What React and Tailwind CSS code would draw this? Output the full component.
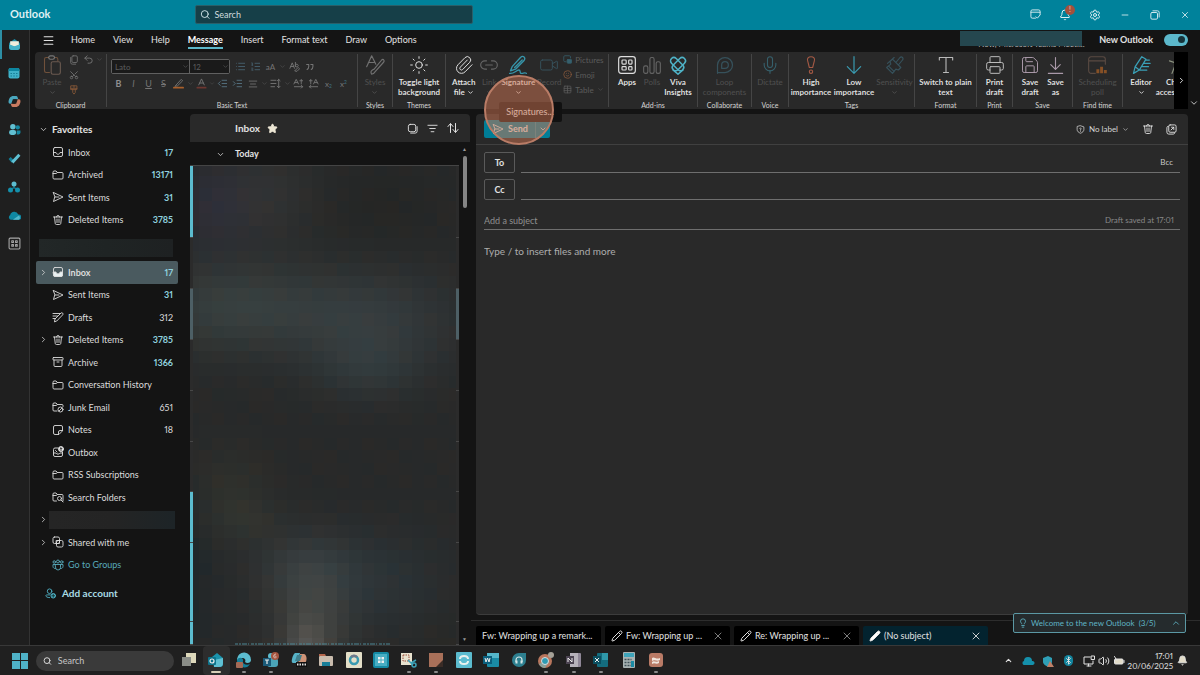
import React from 'react';
import clsx from 'clsx';
import {
  Search, ChevronDown, ChevronRight, ChevronUp, Menu, Minus, X, Settings, Bell, Star,
  Scissors, Undo2, Sun, Paperclip, Link2, Video, Smile, Table, Mic, Printer, Save,
  ListFilter, Lightbulb, Volume2, Pencil, Archive,
  Bluetooth, List, ListOrdered, IndentDecrease, IndentIncrease,
} from 'lucide-react';

function Icon({ size = 12, width = 1.8, className, children }) {
  return (
    <svg
      width={size} height={size} viewBox="0 0 24 24" fill="none" stroke="currentColor"
      strokeWidth={width} strokeLinecap="round" strokeLinejoin="round"
      className={clsx('shrink-0', className)} aria-hidden="true"
    >
      {children}
    </svg>
  );
}

const FolderShape = () => <path d="M2 6a2 2 0 0 1 2-2h4l3 3h9a2 2 0 0 1 2 2v9a2 2 0 0 1-2 2H4a2 2 0 0 1-2-2zM2 9h6l3-2" />;

const icons = {
  inbox: <Icon><rect x="3" y="3" width="18" height="18" rx="3" /><path d="M3 13h5c.5 2.500 2 3.500 4 3.500s3.500-1 4-3.500h5" /></Icon>,
  inboxFull: <Icon><rect x="3" y="3" width="18" height="18" rx="3" /><path d="M3 12h5c.5 2.500 2 3.500 4 3.500s3.500-1 4-3.500h5v6a3 3 0 0 1-3 3H6a3 3 0 0 1-3-3z" fill="#e8f1f3" /></Icon>,
  folder: <Icon><FolderShape /></Icon>,
  send: <Icon><path d="M3 3l19 9-19 9 2.500-9zM5.500 12H14" /></Icon>,
  trash: <Icon><path d="M3 6h18M9 6a3 3 0 0 1 6 0M5 6l1.500 13a2.500 2.500 0 0 0 2.500 2h6a2.500 2.500 0 0 0 2.500-2L19 6M10 10v7M14 10v7" /></Icon>,
  drafts: <Icon><path d="M2 5h15M2 10h9M2 15h5M5 21l1-5L18 4a2.500 2.500 0 0 1 3.500 3.500L10 19.500z" /></Icon>,
  archive: <Archive size={12} strokeWidth={1.8} />,
  junk: <Icon><path d="M10 20H4a2 2 0 0 1-2-2V6a2 2 0 0 1 2-2h4l3 3h9a2 2 0 0 1 2 2v2M2 9h6l3-2" /><circle cx="17" cy="17" r="5" /><path d="M14 20l6-6" /></Icon>,
  note: <Icon><path d="M21 13V6a3 3 0 0 0-3-3H6a3 3 0 0 0-3 3v12a3 3 0 0 0 3 3h7zM21 13h-5a3 3 0 0 0-3 3v5" /></Icon>,
  outbox: <Icon><path d="M12 4H6a3 3 0 0 0-3 3v11a3 3 0 0 0 3 3h12a3 3 0 0 0 3-3v-6M3 14h5c1 3 7 3 8 0h5M7 9l3 3" /><circle cx="18" cy="6" r="5" fill="#eee" /><path d="M18 9V4M16 5.500l2-2 2 2" stroke="#222" /></Icon>,
  searchFolder: <Icon><path d="M9 20H4a2 2 0 0 1-2-2V6a2 2 0 0 1 2-2h4l3 3h9a2 2 0 0 1 2 2v11M2 9h6l3-2" /><circle cx="15" cy="15" r="4" /><path d="M18 18l4 4" /></Icon>,
  shared: <Icon><rect x="2" y="2" width="13" height="13" rx="3" /><rect x="9" y="9" width="13" height="13" rx="3" /><path d="M9 9h6v6H9z" /></Icon>,
  groups: <Icon><circle cx="12" cy="5" r="3" /><circle cx="4.500" cy="6" r="2.500" /><circle cx="19.500" cy="6" r="2.500" /><path d="M7 11h10v6a5 5 0 0 1-10 0zM7 11H2v4a4 4 0 0 0 5 4M17 11h5v4a4 4 0 0 1-5 4" /></Icon>,
};

/* ---------- title bar ---------- */

function TitleBar() {
  return (
    <header className="flex h-[30px] shrink-0 items-center bg-[#00829b] pb-px text-[#dff0f3]">
      <div className="w-[195px] shrink-0 pl-[10px] text-[11px] font-bold">Outlook</div>
      <label className="flex h-[19px] w-[278px] items-center gap-1 rounded-xs border border-[#2a5f69] bg-[#163f48] px-1">
        <Search size={11} strokeWidth={2} />
        <span className="sr-only">Search mail</span>
        <input placeholder="Search" className="h-full w-full bg-transparent text-[9px] outline-none placeholder:text-[#cfdcde]" />
      </label>
      <div className="ml-auto grid grid-cols-6 items-center">
        <button aria-label="My day" className="flex w-[30px] justify-center">
          <Icon size={11} width={2}><path d="M12 20H5a3 3 0 0 1-3-3V5a3 3 0 0 1 3-3h14a3 3 0 0 1 3 3v7M2 7h20M13 17l3 3 6-7" /></Icon>
        </button>
        <button aria-label="Notifications" className="relative flex w-[30px] justify-center">
          <Bell size={12} />
          <span className="absolute -top-1 right-[5px] flex size-[10px] items-center justify-center rounded-full bg-[#a3503c] text-[7px] text-[#e8cfc8]">!</span>
        </button>
        <button aria-label="Settings" className="flex w-[30px] justify-center"><Settings size={12} /></button>
        <button aria-label="Minimize" className="flex w-[30px] justify-center"><Minus size={10} strokeWidth={2} /></button>
        <button aria-label="Restore" className="flex w-[30px] justify-center">
          <Icon size={10} width={2.2}><rect x="2" y="6" width="16" height="16" rx="3" /><path d="M7 2h11a4 4 0 0 1 4 4v11" /></Icon>
        </button>
        <button aria-label="Close" className="flex w-[30px] justify-center"><X size={10} strokeWidth={2} /></button>
      </div>
    </header>
  );
}

/* ---------- app rail ---------- */

const railApps = [
  ['Mail', <svg width="13" height="13" viewBox="0 0 24 24"><path d="M2 9l10-7 10 7v9a4 4 0 0 1-4 4H6a4 4 0 0 1-4-4z" fill="#1c8ba5" /><path d="M4 6h16v7l-8 3-8-3z" fill="#f0eddc" /><path d="M2 12l10 3 10-3v6a4 4 0 0 1-4 4H6a4 4 0 0 1-4-4z" fill="#45b2c8" /></svg>],
  ['Calendar', <svg width="12" height="12" viewBox="0 0 24 24"><rect x="1" y="2" width="22" height="21" rx="4" fill="#3fb1c8" /><path d="M1 8V6a4 4 0 0 1 4-4h14a4 4 0 0 1 4 4v2z" fill="#0d86a0" /><path d="M5 13h14M5 18h14" stroke="#167d94" strokeWidth="2" strokeDasharray="3 2.5" /></svg>],
  ['Copilot', <svg width="13" height="13" viewBox="0 0 24 24"><path d="M8 2h7c3 0 3 4 4 6H9L6 16H4c-5 0-3-8 0-12z" fill="#4aa6bd" /><path d="M16 22H9c-3 0-3-4-4-6h10l3-8h2c5 0 3 8 0 12z" fill="#c87a60" /><path d="M10 8h6l-3 8H8z" fill="#1f1f1f" /></svg>],
  ['People', <svg width="13" height="13" viewBox="0 0 24 24"><circle cx="9" cy="7" r="5" fill="#61c0d2" /><circle cx="18" cy="8" r="4" fill="#1388a2" /><rect x="2" y="13" width="13" height="9" rx="4" fill="#61c0d2" /><path d="M16 14h7v3c0 3-3 5-7 4z" fill="#1388a2" /></svg>],
  ['To Do', <svg width="13" height="13" viewBox="0 0 24 24"><path d="M1 13l4-4 6 6-4 5z" fill="#127d96" /><path d="M6 17L19 3l4 4L10 21z" fill="#5fc0d3" /></svg>],
  ['Org Explorer', <svg width="12" height="12" viewBox="0 0 24 24"><path d="M12 8v6M5 18l7-5 7 5" stroke="#147d94" strokeWidth="3" fill="none" /><circle cx="12" cy="6" r="5" fill="#5cbccf" /><circle cx="5" cy="18" r="5" fill="#1490ac" /><circle cx="19" cy="18" r="5" fill="#1490ac" /></svg>],
  ['OneDrive', <svg width="13" height="13" viewBox="0 0 24 24"><path d="M5 20a5 5 0 0 1-1-9 8 8 0 0 1 15-1 5 5 0 0 1 1 10z" fill="#0f87a2" /><path d="M9 20l11-8a5 5 0 0 1 0 8z" fill="#52b7cb" /></svg>],
  ['More apps', <Icon size={13} width={2} className="text-[#a8a8a8]"><rect x="2" y="2" width="20" height="20" rx="2" /><path d="M7 7h3v3H7zM14 7h3v3h-3zM7 14h3v3H7zM14 14h3v3h-3z" /></Icon>],
];

function AppRail() {
  return (
    <nav className="w-[30px] shrink-0 border-r border-[#333] bg-[#1f1f1f]">
      <div className="grid h-[228px] auto-rows-fr">
        {railApps.map(([name, art], i) => (
          <a
            key={name} href="#" aria-label={name}
            className={clsx('flex items-center border-l-2 pl-[6px]', i === 0 ? 'border-[#2d8fa5]' : 'border-transparent')}
          >
            {art}
          </a>
        ))}
      </div>
    </nav>
  );
}

/* ---------- tabs over the ribbon ---------- */

function TabBar() {
  const tabs = ['Home', 'View', 'Help', 'Message', 'Insert', 'Format text', 'Draw', 'Options'];
  return (
    <div className="flex h-[22px] shrink-0 items-start pt-[2px] pr-3 pl-[12px]">
      <button aria-label="Menu" className="mr-[16px] flex h-[17px] items-center"><Menu size={13} strokeWidth={2} /></button>
      <div role="tablist" className="flex gap-[18px] text-[9px]">
        {tabs.map((tab) => (
          <button
            key={tab} role="tab" aria-selected={tab === 'Message'}
            className={clsx('h-[17px] border-b-2', tab === 'Message' ? 'border-[#5cb8cb] font-bold text-white' : 'border-transparent')}
          >
            {tab}
          </button>
        ))}
      </div>
      <div className="relative ml-auto h-[20px] w-[122px]">
        <p className="pt-[6px] pl-[18px] text-[8px] leading-[12px] whitespace-nowrap text-[#bbb]">Now, Microsoft Teams Meeti...</p>
        <span className="absolute inset-x-0 -top-px h-[15px] bg-[#25474f]" />
      </div>
      <label className="ml-[17px] flex h-[15px] items-center gap-[11px] text-[9px] font-bold">
        New Outlook
        <input
          type="checkbox" defaultChecked
          className="flex h-[12px] w-[24px] appearance-none items-center justify-end rounded-full bg-[#5cb8cb] px-[3px] before:size-[7px] before:rounded-full before:bg-[#16343b]"
        />
      </label>
    </div>
  );
}

/* ---------- ribbon ---------- */

function Group({ label, className, children }) {
  return (
    <div className={clsx('flex h-[57px] shrink-0', className)}>
      <div className="flex min-w-0 flex-1 flex-col">
        <div className="flex flex-1 justify-center">{children}</div>
        <div className="h-[8px] text-center text-[7px] leading-[8px] text-[#d4d4d4]">{label}</div>
      </div>
      <span className="my-[2px] w-px bg-[#454545]" />
    </div>
  );
}

function BigButton({ art, lines, dim, arrow, inlineArrow, className, children }) {
  return (
    <div className={clsx('relative shrink-0 pt-[3px]', className)}>
      <button className={clsx('flex w-full flex-col items-center text-[8px] leading-[10px] whitespace-nowrap', dim ? 'text-[#505050]' : 'font-bold text-[#dedede]')}>
        <span className="mb-[2px] flex h-[20px] items-center">{art}</span>
        {lines.map((line, i) => (
          <span key={line} className="flex items-center gap-[2px]">
            {line}
            {inlineArrow && i === lines.length - 1 && <ChevronDown size={7} strokeWidth={3} />}
          </span>
        ))}
        {arrow && <ChevronDown size={7} strokeWidth={3} className="mt-[2px]" />}
      </button>
      {children}
    </div>
  );
}

const Tiny = ({ label, className, children }) => (
  <button aria-label={label} className={clsx('flex h-[15px] items-center justify-center text-[#757575]', className ?? 'w-[15px]')}>{children}</button>
);

const Down = () => <ChevronDown size={7} strokeWidth={2.5} className="text-[#4a4a4a]" />;

function BasicText() {
  return (
    <div className="flex w-full flex-col gap-[2px] pt-[7px] pl-[4px]">
      <div className="flex items-center">
        <div className="mr-[3px] flex h-[15px] rounded-xs border border-[#606060] text-[8px] text-[#5d5d5d]">
          <span className="relative flex w-[78px] items-center border-r border-[#606060]">
            <select aria-label="Font" className="h-full w-full appearance-none bg-[#1a1a1a] pl-[3px] outline-none"><option>Lato</option></select>
            <ChevronDown size={7} className="absolute right-0" />
          </span>
          <span className="relative flex w-[39px] items-center">
            <select aria-label="Font size" className="h-full w-full appearance-none bg-[#1a1a1a] pl-[3px] outline-none"><option>12</option></select>
            <ChevronDown size={7} className="absolute right-0" />
          </span>
        </div>
        <Tiny label="Bullets"><List size={11} className="text-[#46606e]" /></Tiny>
        <Tiny label="Numbering"><ListOrdered size={11} className="text-[#46606e]" /></Tiny>
        <Tiny label="Change case"><span className="text-[8px]">aA</span></Tiny>
        <Tiny label="Case options" className="w-[9px]"><Down /></Tiny>
        <Tiny label="Clear formatting"><Icon size={11} width={2}><path d="M2 16L7 4l5 12M4 12h6M14 3v9M14 9a3 3 0 1 1 0 2M13 21l7-7 3 3-5 5z" /></Icon></Tiny>
        <Tiny label="Quote"><Icon size={10} width={2.500}><path d="M4 6h5v5c0 4-2 6-4 7M14 6h5v5c0 4-2 6-4 7" /></Icon></Tiny>
      </div>
      <div className="flex items-center text-[9px]">
        <Tiny label="Bold"><b className="text-[#8f8f8f]">B</b></Tiny>
        <Tiny label="Italic"><i>I</i></Tiny>
        <Tiny label="Underline"><u>U</u></Tiny>
        <Tiny label="Strikethrough"><s>S</s></Tiny>
        <Tiny label="Highlight"><Icon size={11} width={2}><path d="M7 15L18 3l3 3L10 17l-5 1z" /><path d="M2 21h20" stroke="#a85f2b" strokeWidth="4" /></Icon></Tiny>
        <Tiny label="Highlight colours" className="w-[8px]"><Down /></Tiny>
        <Tiny label="Font colour"><Icon size={11} width={2}><path d="M6 15l6-13 6 13M8 11h8" /><path d="M3 21h18" stroke="#6d3730" strokeWidth="4" /></Icon></Tiny>
        <Tiny label="Font colours" className="w-[6px]"><Down /></Tiny>
        <Tiny label="Decrease indent"><IndentDecrease size={11} className="text-[#557382]" /></Tiny>
        <Tiny label="Increase indent"><IndentIncrease size={11} className="text-[#557382]" /></Tiny>
        <Tiny label="Align"><Icon size={10} width={2}><path d="M3 5h18M6 12h12M3 19h18" /></Icon></Tiny>
        <Tiny label="Alignments" className="w-[8px]"><Down /></Tiny>
        <Tiny label="Line spacing"><Icon size={11} width={2}><path d="M2 5h11M2 12h11M2 19h8M19 3v18M16 6l3-3 3 3M16 18l3 3 3-3" /></Icon></Tiny>
        <Tiny label="Line spacings" className="w-[8px]"><Down /></Tiny>
        <Tiny label="Left to right"><Icon size={11} width={2}><path d="M2 13L7 3l5 10M4 10h6M18 3v10M15 6h6M3 19h18M18 16l3 3-3 3" /></Icon></Tiny>
        <Tiny label="Right to left"><Icon size={11} width={2}><path d="M12 13l5-10 5 10M14 10h6M6 3v10M3 6h6M3 19h18M6 16l-3 3 3 3" /></Icon></Tiny>
        <Tiny label="Subscript"><span className="text-[8px]">x<sub className="text-[5px] text-[#3f7486]">2</sub></span></Tiny>
        <Tiny label="Superscript"><span className="text-[8px]">x<sup className="text-[5px] text-[#3f7486]">2</sup></span></Tiny>
      </div>
    </div>
  );
}

function SignatureButton() {
  return (
    <BigButton
      className="w-[34px]" lines={['Signature']} arrow
      art={<Icon size={20} width={1.6} className="text-[#3796ab]"><path d="M5 14L15 3c3-3 7 0 4 4L9 17l-6 2zM8 15l9-9M2 22c5 1 8-4 11-4s0 5 4 4 3-1 5 0" /></Icon>}
    >
      <button className="absolute top-[50px] -left-[2px] z-10 h-[20px] w-[63px] rounded-xs bg-[#111] pl-[7px] text-left text-[9px] whitespace-nowrap text-[#e5e5e5]">
        Signatures...
      </button>
      {/* click highlight */}
      <span className="pointer-events-none absolute top-[23px] -left-[17px] z-20 size-[70px] rounded-full border-2 border-[#b97c66] bg-[#cf7553]/50" />
    </BigButton>
  );
}

function Ribbon() {
  return (
    <div className="flex shrink-0 pl-[5px]">
      <div className="flex min-w-0 flex-1 rounded-sm bg-[#292929]">
        <Group label="Clipboard" className="w-[72px]">
          <BigButton
            className="w-[28px]" lines={['Paste']} arrow dim
            art={<Icon size={20} width={1.3}><path d="M9 21H5a2 2 0 0 1-2-2V5a2 2 0 0 1 2-2h3M15 3h2a2 2 0 0 1 2 2v2" stroke="#70513b" /><rect x="8" y="1" width="7" height="4" rx="2" stroke="#777" /><rect x="11" y="8" width="11" height="15" rx="2" stroke="#6b5a50" /></Icon>}
          />
          <div className="flex flex-col">
            <Tiny label="Copy"><Icon size={10} width={2}><rect x="7" y="2" width="13" height="16" rx="3" /><path d="M4 6v12a4 4 0 0 0 4 4h8" /></Icon></Tiny>
            <Tiny label="Cut"><Scissors size={10} className="-rotate-90" /></Tiny>
            <Tiny label="Format painter"><Icon size={10} width={2} className="text-[#8a5a38]"><path d="M5 2h14v9H5zM5 8h14M9 11v7l3 4 3-4v-7M12 2v4" /></Icon></Tiny>
          </div>
          <div className="flex">
            <Tiny label="Undo"><Undo2 size={11} /></Tiny>
            <Tiny label="Undo list" className="w-[7px]"><Down /></Tiny>
          </div>
        </Group>
        <Group label="Basic Text" className="w-[251px]"><BasicText /></Group>
        <Group label="Styles" className="w-[35px]">
          <BigButton lines={['Styles']} arrow dim art={<Icon size={20} width={1.4} className="text-[#717171]"><path d="M2 14L8 1l5 10M4 9h7M8 23c-2-3 0-5 3-6L20 6c2-2 4 1 2 3L13 19c-2 3-3 4-5 4z" /></Icon>} />
        </Group>
        <Group label="Themes" className="w-[53px]">
          <BigButton lines={['Toggle light', 'background']} art={<Sun size={20} strokeWidth={1.2} />} />
        </Group>
        <Group className="w-[163px]">
          <BigButton className="w-[27px]" lines={['Attach', 'file']} inlineArrow art={<Paperclip size={20} strokeWidth={1.2} />} />
          <BigButton className="w-[24px]" lines={['Link']} arrow dim art={<Link2 size={20} strokeWidth={1.4} className="text-[#666]" />} />
          <SignatureButton />
          <BigButton className="w-[28px]" lines={['Record']} dim art={<Video size={20} strokeWidth={1.2} className="text-[#36515b]" />} />
          <div className="flex flex-col text-[8px] text-[#5c5c5c]">
            <button className="flex h-[15px] items-center gap-[3px]"><Icon size={9} width={2} className="text-[#35606e]"><path d="M8 18H5a3 3 0 0 1-3-3V5a3 3 0 0 1 3-3h12a3 3 0 0 1 3 3v3" /><rect x="11" y="12" width="12" height="10" rx="2" fill="#35606e" /></Icon>Pictures</button>
            <button className="flex h-[15px] items-center gap-[3px]"><Smile size={9} className="text-[#8a5a3c]" />Emoji</button>
            <button className="flex h-[15px] items-center gap-[3px]"><Table size={9} />Table<Down /></button>
          </div>
        </Group>
        <Group label="Add-ins" className="w-[89px]">
          <BigButton className="w-[25px]" lines={['Apps']} art={<Icon size={20} width={1.4}><rect x="2" y="2" width="20" height="20" rx="3" /><rect x="6" y="6" width="5" height="5" rx="1" /><rect x="14" y="6" width="4" height="5" rx="1" /><rect x="6" y="14" width="5" height="4" rx="1" /><rect x="14" y="14" width="4" height="4" rx="1" /></Icon>} />
          <BigButton className="w-[25px]" lines={['Polls']} dim art={<Icon size={20} width={1.3} className="text-[#666]"><rect x="2" y="13" width="5" height="9" rx="2" /><rect x="9.500" y="3" width="5" height="19" rx="2" /><rect x="17" y="8" width="5" height="14" rx="2" /></Icon>} />
          <BigButton className="w-[27px]" lines={['Viva', 'Insights']} art={<Icon size={20} width={1.8} className="text-[#4fb3c7]"><rect x="1" y="8" width="19" height="8" rx="4" transform="rotate(45 12 12)" /><rect x="4" y="8" width="19" height="8" rx="4" transform="rotate(-45 12 12)" /><path d="M6 18l6 5 6-5" /></Icon>} />
        </Group>
        <Group label="Collaborate" className="w-[54px]">
          <BigButton lines={['Loop', 'components']} dim art={<Icon size={20} width={1.5} className="text-[#36515b]"><path d="M3 22V12a9 9 0 1 1 9 9H3M8 16v-4a4 4 0 1 1 4 4H8" /></Icon>} />
        </Group>
        <Group label="Voice" className="w-[37px]">
          <BigButton lines={['Dictate']} dim art={<Mic size={20} strokeWidth={1.3} className="text-[#36606c]" />} />
        </Group>
        <Group label="Tags" className="w-[126px]">
          <BigButton className="w-[43px]" lines={['High', 'importance']} art={<Icon size={20} width={1.3} className="text-[#a65a45]"><path d="M12 2c3 0 5 2 4 5l-2 8h-4L8 7c-1-3 1-5 4-5z" /><circle cx="12" cy="20" r="2" /></Icon>} />
          <BigButton className="w-[43px]" lines={['Low', 'importance']} art={<Icon size={20} width={1.4} className="text-[#3a9db3]"><path d="M12 2v20M4 14l8 8 8-8" /></Icon>} />
          <BigButton className="w-[38px]" lines={['Sensitivity']} arrow dim art={<Icon size={20} width={1.4} className="text-[#36515b]"><path d="M9 5l10 10-3 3-3-1-4 5-7-7 5-4-1-3zM13 9l5-6a2 2 0 0 1 3 3l-5 6M11 3L3 10M5 14l6 6" /></Icon>} />
        </Group>
        <Group label="Format" className="w-[62px]">
          <BigButton lines={['Switch to plain', 'text']} art={<Icon size={20} width={1.3} className="text-[#bbb]"><path d="M4 6V3h16v3M12 3v18M9 21h6" /></Icon>} />
        </Group>
        <Group label="Print" className="w-[36px]">
          <BigButton lines={['Print', 'draft']} art={<Printer size={20} strokeWidth={1.200} className="text-[#bbb]" />} />
        </Group>
        <Group label="Save" className="w-[60px]">
          <BigButton className="w-[26px]" lines={['Save', 'draft']} art={<Save size={20} strokeWidth={1.200} className="text-[#a998a8]" />} />
          <BigButton className="w-[25px]" lines={['Save', 'as']} art={<Icon size={19} width={1.4} className="text-[#a998a8]"><path d="M12 2v15M6 11l6 6 6-6M3 22h18" /></Icon>} />
        </Group>
        <Group label="Find time" className="w-[50px]">
          <BigButton lines={['Scheduling', 'poll']} dim art={<Icon size={20} width={1.3} className="text-[#5a4a42]"><path d="M10 22H5a3 3 0 0 1-3-3V5a3 3 0 0 1 3-3h14a3 3 0 0 1 3 3v6M2 7h20" /><path d="M13 22v-5M17.500 22v-8M22 22v-4" stroke="#865026" strokeWidth="3.500" strokeLinecap="butt" /></Icon>} />
        </Group>
        <div className="flex min-w-0 flex-1 overflow-hidden">
          <BigButton className="w-[36px]" lines={['Editor']} arrow art={<Icon size={20} width={1.5} className="text-[#3aa0b7]"><path d="M3 22l2-8L13 2l5 3-8 13zM5 14l5 4M16 10h7M14 14h7M11 18h8M17 6h5" /></Icon>} />
          <BigButton className="w-[36px]" lines={['Check', 'accessibility']} art={<Icon size={20} width={1.400} className="text-[#8d9480]"><circle cx="12" cy="4" r="2.500" /><path d="M3 7l6 2v5l-3 8M21 7l-6 2v5l3 8M9 9h6" /></Icon>} />
        </div>
        <button aria-label="Scroll ribbon" className="z-10 flex w-[14px] shrink-0 items-center justify-center bg-black"><ChevronRight size={9} strokeWidth={2.500} /></button>
      </div>
      <button aria-label="Collapse ribbon" className="flex w-3 items-end justify-center pb-px"><ChevronDown size={10} strokeWidth={2} /></button>
    </div>
  );
}

/* ---------- folders ---------- */

const favorites = [
  { icon: 'inbox', name: 'Inbox', count: 17, unread: true },
  { icon: 'folder', name: 'Archived', count: 13171, unread: true },
  { icon: 'send', name: 'Sent Items', count: 31, unread: true },
  { icon: 'trash', name: 'Deleted Items', count: 3785, unread: true },
];

const mailbox = [
  { icon: 'inboxFull', name: 'Inbox', count: 17, unread: true, open: true, selected: true },
  { icon: 'send', name: 'Sent Items', count: 31, unread: true },
  { icon: 'drafts', name: 'Drafts', count: 312 },
  { icon: 'trash', name: 'Deleted Items', count: 3785, unread: true, open: true },
  { icon: 'archive', name: 'Archive', count: 1366, unread: true },
  { icon: 'folder', name: 'Conversation History' },
  { icon: 'junk', name: 'Junk Email', count: 651 },
  { icon: 'note', name: 'Notes', count: 18 },
  { icon: 'outbox', name: 'Outbox' },
  { icon: 'folder', name: 'RSS Subscriptions' },
  { icon: 'searchFolder', name: 'Search Folders' },
  { hidden: true, open: true },
  { icon: 'shared', name: 'Shared with me', open: true },
  { icon: 'groups', name: 'Go to Groups', link: true },
];

function FolderRow({ icon, name, count, unread, open, selected, link, hidden }) {
  return (
    <a
      href="#"
      className={clsx('flex items-center rounded-xs pr-[5px] pl-[3px] text-[9px]', selected && 'bg-[#4a5a5f] font-bold', link ? 'text-[#58aabb]' : 'text-[#dcdcdc]')}
    >
      <span className={hidden ? 'w-[10px]' : 'w-[13px]'}>{open && <ChevronRight size={9} strokeWidth={2} />}</span>
      {hidden ? (
        <span className="-mr-[2px] h-[18px] flex-1 bg-linear-to-r from-[#252525] via-[#242424] to-[#1d2427]" />
      ) : (
        <>
          <span className="flex w-[16px]">{icons[icon]}</span>
          <span className="flex-1">{name}</span>
          <span className={clsx(unread && 'font-bold text-[#8fd0de]')}>{count}</span>
        </>
      )}
    </a>
  );
}

function FolderPane() {
  return (
    <aside className="flex w-[160px] shrink-0 flex-col pt-[10px] pr-[12px] pl-[6px]">
      <button className="flex h-[20px] items-center gap-[4px] pl-[3px] text-[10px] font-bold"><ChevronDown size={9} strokeWidth={2} />Favorites</button>
      <div className="mt-[2px] grid h-[90px] auto-rows-fr">
        {favorites.map((f) => <FolderRow key={f.name} {...f} />)}
      </div>
      <div className="mt-[8px] mr-[5px] ml-[3px] h-[18px] shrink-0 bg-linear-to-r from-[#222727] via-[#1f2424] to-[#1e2122]" />
      <div className="mt-[4px] grid h-[315px] auto-rows-fr">
        {mailbox.map((f, i) => <FolderRow key={i} {...f} />)}
      </div>
      <button className="mt-[10px] flex items-center gap-[6px] pl-[9px] text-[10px] font-bold text-[#a9dbe4]">
        <Icon size={11} width={2} className="text-[#4fb0c4]"><circle cx="10" cy="7" r="5" /><path d="M10 21c-5 0-8-2-8-4s1-2 3-2h6" /><circle cx="18" cy="17" r="5" fill="#4fb0c4" /><path d="M18 14v6M15 17h6" stroke="#133" /></Icon>
        Add account
      </button>
    </aside>
  );
}

/* ---------- message list ---------- */

// [col, row, spread x, spread y, r, g, b]
const glows = [
  [1.500, 3, 3, 3.500, 4, 3, 12],
  [6, 2, 4, 4, 9, 9, 9],
  [15, 3, 6, 4, -3, -3, -4],
  [3, 11, 7, 3.500, 15, 21, 20],
  [14, 12, 7, 4, 13, 18, 20],
  [14, 16, 4, 2.500, 6, 11, 12],
  [3, 25, 3, 3, 6, 6, 2],
  [4, 28, 3, 2, 7, 8, 5],
  [9, 32, 4, 3, 14, 18, 19],
  [9.500, 37, 3, 4, 28, 25, 20],
  [9, 39, 1.500, 2.500, 22, 24, 27],
  [15, 33, 5, 4, 3, 9, 12],
  [0, 33, 1.500, 6, -8, -2, 1],
  [20, 38, 2.500, 3, 0, -1, -3],
];

function cellColour(col, row) {
  const noise = ((col * 37 + row * 91 + col * row * 13) % 5) - 2;
  const rgb = [40 + noise, 41, 41 - noise / 2];
  glows.forEach(([x, y, sx, sy, ...add]) => {
    const k = Math.exp(-(((col - x) / sx) ** 2 + ((row - y) / sy) ** 2));
    add.forEach((v, i) => { rgb[i] += v * k; });
  });
  return `rgb(${rgb.map(Math.round).join(',')})`;
}

function Preview() {
  const cells = [];
  for (let row = 0; row < 39; row++) {
    for (let col = 0; col < 22; col++) {
      cells.push(<rect key={`${row}-${col}`} x={col * 12.5 - 6.5} y={row * 12.5 - 2.5} width="12.5" height="12.5" fill={cellColour(col, row)} />);
    }
  }
  return (
    <svg viewBox="0 0 263 480" preserveAspectRatio="none" shapeRendering="crispEdges" className="h-full min-w-0 flex-1" aria-hidden="true">
      {cells}
      <path d="M42 479h155" stroke="#4d8795" strokeWidth="1" strokeDasharray="3 1 2 1 5 1 1 2" />
    </svg>
  );
}

const rowMarks = [
  ['h-[72px]', 'bg-[#5cbccf]', 'bg-[#2b2b2b]'],
  ['h-[51px]', 'bg-[#2b2b2b]', 'bg-[#2b2b2b]'],
  ['h-[51px]', 'bg-[#4d5f65]', 'bg-[#4d5f65]'],
  ['h-[51px]', 'bg-[#2b2b2b]', 'bg-[#2b2b2b]'],
  ['h-[51px]', 'bg-[#2b2b2b]', 'bg-[#2b2b2b]'],
  ['h-[50px]', 'bg-[#2b2b2b]', 'bg-[#2b2b2b]'],
  ['h-[51px]', 'bg-[#5cbccf]', 'bg-[#2b2b2b]'],
  ['h-[79px]', 'bg-[#5cbccf]', 'bg-[#2b2b2b]'],
  ['flex-1', 'bg-[#5cbccf]', 'bg-[#2b2b2b]'],
];

function MessageList() {
  return (
    <section className="flex w-[280px] shrink-0 flex-col pt-[5px]">
      <div className="flex h-[28px] shrink-0 items-center rounded-t-sm bg-[#292929] pr-[11px] pl-[45px]">
        <h2 className="text-[10px] font-bold">Inbox</h2>
        <Star size={11} className="ml-[7px] fill-[#ece6d4] text-[#ece6d4]" />
        <div className="ml-auto flex gap-[9px]">
          <button aria-label="Select"><Icon size={11} width={2}><rect x="3" y="3" width="16" height="16" rx="4" /><path d="M8 22h10a4 4 0 0 0 4-4V8" /></Icon></button>
          <button aria-label="Filter"><ListFilter size={11} strokeWidth={2} /></button>
          <button aria-label="Sort"><Icon size={12} width={2}><path d="M7 21V4M2 9l5-6 5 6M17 3v17M12 15l5 6 5-6" /></Icon></button>
        </div>
      </div>
      <div className="flex min-h-0 flex-1 pt-px">
        <div className="flex min-w-0 flex-1 flex-col">
          <button className="flex h-[23px] shrink-0 items-center gap-[10px] border-b border-[#444] pl-[26px] text-[9px] font-bold">
            <ChevronDown size={9} strokeWidth={2} />Today
          </button>
          <div className="flex min-h-0 flex-1">
            <div className="flex w-[3px] flex-col">
              {rowMarks.map(([h, left], i) => <span key={i} className={clsx(h, left, 'border-b border-[#474747]')} />)}
            </div>
            <Preview />
            <div className="flex w-[3px] flex-col">
              {rowMarks.map(([h, , right], i) => <span key={i} className={clsx(h, right, 'border-b border-[#474747]')} />)}
            </div>
          </div>
        </div>
        <div className="flex w-[11px] flex-col items-center pt-[4px] pb-[3px] text-[5px] leading-[5px] text-[#999]">
          <span>▲</span>
          <span className="mt-[4px] h-[52px] w-[4px] rounded-full bg-[#858585]" />
          <span className="mt-auto">▼</span>
        </div>
      </div>
    </section>
  );
}

/* ---------- compose ---------- */

function Compose() {
  return (
    <section className="mr-3 ml-[6px] flex min-h-0 flex-1 flex-col rounded-sm border-b border-[#3c3c3c] bg-[#292929]">
      <div className="flex h-[31px] shrink-0 items-center border-b border-[#404040] px-[8px]">
        <div className="flex h-[18px] items-center rounded-xs bg-[#007d96] text-[9px] font-bold">
          <button className="flex h-full w-[52px] items-center gap-[4px] border-r border-[#2b8ea2] pl-[8px]">{icons.send}Send</button>
          <button aria-label="Send options" className="flex w-[14px] justify-center"><ChevronDown size={8} strokeWidth={2.500} /></button>
        </div>
        <div className="ml-auto flex items-center">
          <button className="flex items-center gap-[4px] text-[8px] text-[#d6d6d6]">
            <Icon size={9} width={2}><path d="M12 2l9 3v7c0 5-4 8-9 10-5-2-9-5-9-10V5zM10 9a2 2 0 1 1 2 3v2M12 17v0" /></Icon>
            No label
            <ChevronDown size={7} strokeWidth={2} />
          </button>
          <button aria-label="Discard" className="ml-[13px]">{icons.trash}</button>
          <button aria-label="Open in new window" className="ml-[12px] mr-[3px]"><Icon size={11} width={2}><path d="M5 5a3 3 0 0 0-3 3v10a4 4 0 0 0 4 4h10a3 3 0 0 0 3-3" /><rect x="6" y="2" width="16" height="16" rx="3" /><path d="M11 13l6-6M12 7h5v5" /></Icon></button>
        </div>
      </div>
      <div className="flex flex-col gap-[6px] px-[8px] pt-[7px] text-[9px]">
        <div className="flex gap-[6px]">
          <button className="h-[21px] w-[31px] rounded-xs border border-[#5a5a5a] font-bold">To</button>
          <div className="flex flex-1 items-center border-b border-[#6e6e6e] pr-[7px]">
            <input aria-label="To" className="flex-1 bg-transparent outline-none" />
            <button className="text-[8px] text-[#c8c8c8]">Bcc</button>
          </div>
        </div>
        <div className="flex gap-[6px]">
          <button className="h-[21px] w-[31px] rounded-xs border border-[#5a5a5a] font-bold">Cc</button>
          <input aria-label="Cc" className="flex-1 border-b border-[#6e6e6e] bg-transparent outline-none" />
        </div>
      </div>
      <div className="mx-[8px] mt-[11px] flex h-[19px] items-center border-b border-[#6e6e6e]">
        <input aria-label="Subject" placeholder="Add a subject" className="h-full flex-1 bg-transparent text-[9px] outline-none placeholder:text-[#8f8f8f]" />
        <span className="pr-[6px] text-[8px] text-[#888]">Draft saved at 17:01</span>
      </div>
      <textarea
        aria-label="Message" placeholder="Type / to insert files and more"
        className="mx-[8px] mt-[14px] flex-1 resize-none bg-transparent text-[10px] leading-[14px] outline-none placeholder:text-[#adadad]"
      />
    </section>
  );
}

const drafts = [
  { title: 'Fw: Wrapping up a remark...' },
  { title: 'Fw: Wrapping up ...', pencil: true },
  { title: 'Re: Wrapping up ...', pencil: true },
  { title: '(No subject)', pencil: true, active: true },
];

function DraftTabs() {
  return (
    <div className="relative ml-px mt-[5px] flex h-[25px] shrink-0 gap-[4px] border-t border-[#2d2d2d] pt-[5px] pl-[5px] text-[9px]">
      {drafts.map(({ title, pencil, active }) => (
        <div key={title} className={clsx('flex w-[125px] items-center rounded-t-xs px-[6px]', active ? 'bg-[#03232f]' : 'bg-black')}>
          <button className="flex flex-1 items-center gap-[3px] whitespace-nowrap">
            {pencil && <Pencil size={12} strokeWidth={2} className={clsx(active && 'fill-white')} />}
            {title}
          </button>
          {pencil && <button aria-label="Close draft"><X size={12} strokeWidth={1.800} className={clsx(!active && 'text-[#8a8a8a]')} /></button>}
        </div>
      ))}
      <button className="absolute -top-[8px] right-[14px] flex h-[20px] w-[173px] items-center gap-[3px] rounded-xs border border-[#5b98a4] bg-[#252b2d] px-[4px] text-[8px] whitespace-nowrap text-[#5fb4c5]">
        <Lightbulb size={10} />
        <span className="flex-1 text-left">Welcome to the new Outlook&nbsp; (3/5)</span>
        <ChevronUp size={10} />
      </button>
    </div>
  );
}

/* ---------- taskbar ---------- */

const Art = ({ children }) => <svg width="16" height="16" viewBox="0 0 16 16" aria-hidden="true">{children}</svg>;

const taskApps = [
  ['Task view', <Art><rect x="5" y="1" width="10" height="10" fill="#ddd8bb" /><rect x="1" y="5" width="9" height="9" fill="#8a8d87" /></Art>],
  ['Outlook', <Art><path d="M4 5l5-4 6 5v6a3 3 0 0 1-3 3H6z" fill="#1a93ac" /><path d="M6 8l9-2v5a4 4 0 0 1-4 4H6z" fill="#5fc0d3" /><rect x="0" y="5" width="8" height="8" rx="1" fill="#0d738b" /><circle cx="4" cy="9" r="2" fill="none" stroke="#eee" strokeWidth="1.200" /></Art>, 'on'],
  ['Edge', <Art><path d="M1 7a7 7 0 0 1 14 1c0 3-4 4-6 2 1-2 0-4-3-4-2 0-4 1-5 3z" fill="#5cbccf" /><path d="M1 8c2-4 7-2 6 1s4 5 7 3a7 7 0 0 1-13-4z" fill="#137e98" /><rect x="0" y="10" width="7" height="6" rx="1" fill="#a46a56" /></Art>, 'run'],
  ['Teams', <Art><circle cx="8" cy="4" r="3" fill="#5cbccf" /><rect x="4" y="6" width="11" height="9" rx="3" fill="#4ba4b8" /><rect x="0" y="6" width="8" height="8" fill="#1a5a78" /><path d="M2 8h4M4 8v4" stroke="#eee" strokeWidth="1.200" /><circle cx="12" cy="4" r="4" fill="#a4543e" /><path d="M13 2c-3 0-3 4-1 4s1-3-1-2" stroke="#e5c9c0" strokeWidth="0.800" fill="none" /></Art>, 'run'],
  ['Copilot', <Art><path d="M4 1h5l-3 10H2C-1 11 2 2 4 1z" fill="#57b2c7" /><path d="M9 2h4c4 1 3 10-1 10H7z" fill="#cf9478" /><path d="M6 3h5L9 9H4z" fill="#3f7f8d" /><rect x="5" y="10" width="11" height="5" fill="#111" /><path d="M6 12.500h9" stroke="#ddd" strokeWidth="2" strokeDasharray="1.500 1" /></Art>],
  ['Explorer', <Art><path d="M1 2h6l1 2H1z" fill="#b5674d" /><rect x="1" y="4" width="14" height="10" rx="1" fill="#c9bcae" /><rect x="4" y="10" width="8" height="4" fill="#187e98" /></Art>],
  ['Photos', <Art><rect x="0" y="0" width="16" height="16" rx="1" fill="#e4dfc8" /><circle cx="8" cy="8" r="4" fill="none" stroke="#3a9ab0" strokeWidth="2.500" /><path d="M5 5a4 4 0 0 1 6 0" stroke="#71798a" strokeWidth="2.500" fill="none" /></Art>],
  ['Company portal', <Art><rect x="0" y="0" width="16" height="16" rx="2" fill="#158aa4" /><rect x="2" y="2" width="12" height="12" fill="#49aec3" /><path d="M5 5h2.500v2.500H5zM8.500 5H11v2.500H8.500zM5 8.500h2.500V11H5zM8.500 8.500H11V11H8.500z" fill="#eee" /></Art>],
  ['Snipping tool', <Art><rect x="0" y="1" width="11" height="12" fill="#e8e2cf" /><rect x="2" y="3" width="6" height="6" fill="none" stroke="#9a4d38" strokeDasharray="1.500 1" /><path d="M7 8l5 5M15 8l-5 3" stroke="#3da2b8" strokeWidth="1.500" /><circle cx="13" cy="13" r="2" fill="none" stroke="#3da2b8" strokeWidth="1.500" /></Art>, 'run'],
  ['Sticky notes', <Art><path d="M1 1h14v14H1z" fill="#a87059" /><path d="M15 8v7H8z" fill="#3a2c26" /></Art>, 'run'],
  ['Sync', <Art><rect x="0" y="0" width="16" height="16" rx="1" fill="#5cbccf" /><path d="M4 7c0-4 8-4 8 0M4 9c0 4 8 4 8 0" stroke="#e9f1ee" strokeWidth="2" fill="none" /></Art>],
  ['Word', <Art><rect x="4" y="1" width="12" height="14" rx="1" fill="#1a8ba5" /><rect x="4" y="1" width="12" height="5" fill="#55b7cb" /><rect x="0" y="4" width="9" height="8" fill="#0b5f7d" /><path d="M2 6l1 4 1.500-4L6 10l1-4" stroke="#eee" fill="none" /></Art>],
  ['Headset', <Art><path d="M1 8a7 7 0 0 1 7-7h7v7a7 7 0 0 1-14 0z" fill="#2d7f8f" /><path d="M5 10V8a3 3 0 0 1 6 0v2" stroke="#d5e5e5" strokeWidth="1.200" fill="none" /><path d="M5.500 8.500v3M10.500 8.500v3" stroke="#d5e5e5" strokeWidth="2" /></Art>],
  ['Chrome', <Art><circle cx="7" cy="9" r="7" fill="#b8765d" /><path d="M7 9l-6 3a7 7 0 0 0 6 4l4-6z" fill="#8aa09a" /><circle cx="7" cy="9" r="3.500" fill="#2f9bb3" stroke="#ddd" /><circle cx="13" cy="3" r="3" fill="#a5a197" /></Art>, 'run'],
  ['OneNote', <Art><rect x="4" y="1" width="11" height="14" rx="1" fill="#8f8797" /><rect x="4" y="1" width="8" height="14" fill="#b6b2ba" /><rect x="0" y="4" width="8" height="8" fill="#4c4452" /><path d="M2 10V6l4 4V6" stroke="#eee" fill="none" /></Art>, 'run'],
  ['Excel', <Art><rect x="4" y="1" width="11" height="14" rx="1" fill="#146c7e" /><rect x="9" y="1" width="6" height="7" fill="#2f98a9" /><rect x="0" y="4" width="8" height="8" fill="#0b4f60" /><path d="M2 6l4 4M6 6l-4 4" stroke="#eee" /></Art>, 'run'],
  ['Calculator', <Art><rect x="2" y="0" width="12" height="16" rx="1" fill="#a9b3b3" /><rect x="3" y="1" width="10" height="4" fill="#3ea4ba" /><path d="M3.500 7.500h7M3.500 10.500h7M3.500 13.500h7" stroke="#3e5157" strokeWidth="1.500" strokeDasharray="2 1" /><rect x="10" y="9" width="3" height="6" fill="#1a8ba5" /></Art>],
  ['Tango', <Art><rect x="1" y="1" width="14" height="14" rx="3" fill="#b97b66" /><path d="M4 6c2-2 4 2 8 0v2c-3 2-5-1-8 1zM4 10c2-2 4 1 7-1v2c-3 2-4-1-7 1z" fill="#f0e6de" /></Art>, 'run'],
];

function Taskbar() {
  return (
    <footer className="flex h-[30px] shrink-0 items-center border-t border-[#383838] bg-[#202020] px-[12px]">
      <button aria-label="Start" className="mr-[8px] grid size-[16px] shrink-0 grid-cols-2 gap-px">
        {[0, 1, 2, 3].map((n) => <span key={n} className="bg-[#4fb2c7]" />)}
      </button>
      <label className="flex h-[20px] w-[138px] shrink-0 items-center gap-[6px] rounded-full bg-[#3a3a3a] px-[7px]">
        <Search size={10} strokeWidth={2.500} />
        <span className="sr-only">Search Windows</span>
        <input placeholder="Search" className="h-full w-full bg-transparent text-[9px] outline-none placeholder:text-[#c6c6c6]" />
      </label>
      <div className="ml-px grid h-full w-[495px] grid-cols-18">
        {taskApps.map(([name, art, state]) => (
          <button
            key={name} aria-label={name}
            className={clsx('flex flex-col items-center justify-between rounded-sm pt-[6px] pb-[2px]', state === 'on' && 'bg-[#2d2d2d]')}
          >
            {art}
            {state && <span className={clsx('h-[2px] rounded-full', state === 'on' ? 'w-[10px] bg-[#d8cfb8]' : 'w-[4px] bg-[#8b8b8b]')} />}
          </button>
        ))}
      </div>
      <div className="ml-auto flex items-center">
        <button aria-label="Hidden icons" className="flex w-[20px] justify-center"><ChevronUp size={9} strokeWidth={3} /></button>
        <span className="flex w-[20px] justify-center"><Art><path d="M5 12a2 2 0 0 1-1-4 4 4 0 0 1 8 0 2 2 0 0 1 1 4z" fill="#1590ab" /></Art></span>
        <span className="flex w-[20px] justify-center"><Art><path d="M8 3l4 2v4c0 2-2 4-4 5-2-1-5-3-5-5V5z" fill="#2f9fb6" /><path d="M10 8l4 6H7z" fill="#c08067" /></Art></span>
        <span className="mr-[3px] flex w-[20px] justify-center"><span className="rounded-full bg-[#12849d] py-px"><Bluetooth size={9} strokeWidth={2.500} /></span></span>
        <span className="flex w-[15px] justify-center"><Icon size={12} width={2}><path d="M14 4H2v14h18v-6M8 22h8M11 18v4" /><rect x="17" y="2" width="6" height="7" /></Icon></span>
        <span className="flex w-[15px] justify-center"><Volume2 size={12} /></span>
        <span className="flex w-[16px] justify-center"><Icon size={12} width={2}><rect x="3" y="8" width="17" height="10" rx="2" fill="#e2dcc8" /><path d="M22 11v4M3 3l5 8" /></Icon></span>
        <div className="w-[46px] text-right text-[8px] leading-[10px]">
          <div>17:01</div>
          <div>20/06/2025</div>
        </div>
        <Bell size={11} className="ml-[4px] fill-[#e2dcc8]" />
      </div>
    </footer>
  );
}

export default function App() {
  return (
    <div className="flex h-screen min-w-0 flex-col overflow-hidden bg-[#141414] font-['Lato','Noto_Sans',sans-serif] text-[#e2e2e2] proportional-nums">
      <TitleBar />
      <div className="flex min-h-0 flex-1">
        <AppRail />
        <div className="flex min-w-0 flex-1 flex-col">
          <TabBar />
          <Ribbon />
          <main className="flex min-h-0 flex-1">
            <FolderPane />
            <MessageList />
            <div className="flex min-w-0 flex-1 flex-col pt-[5px]">
              <Compose />
              <DraftTabs />
            </div>
          </main>
        </div>
      </div>
      <Taskbar />
    </div>
  );
}
